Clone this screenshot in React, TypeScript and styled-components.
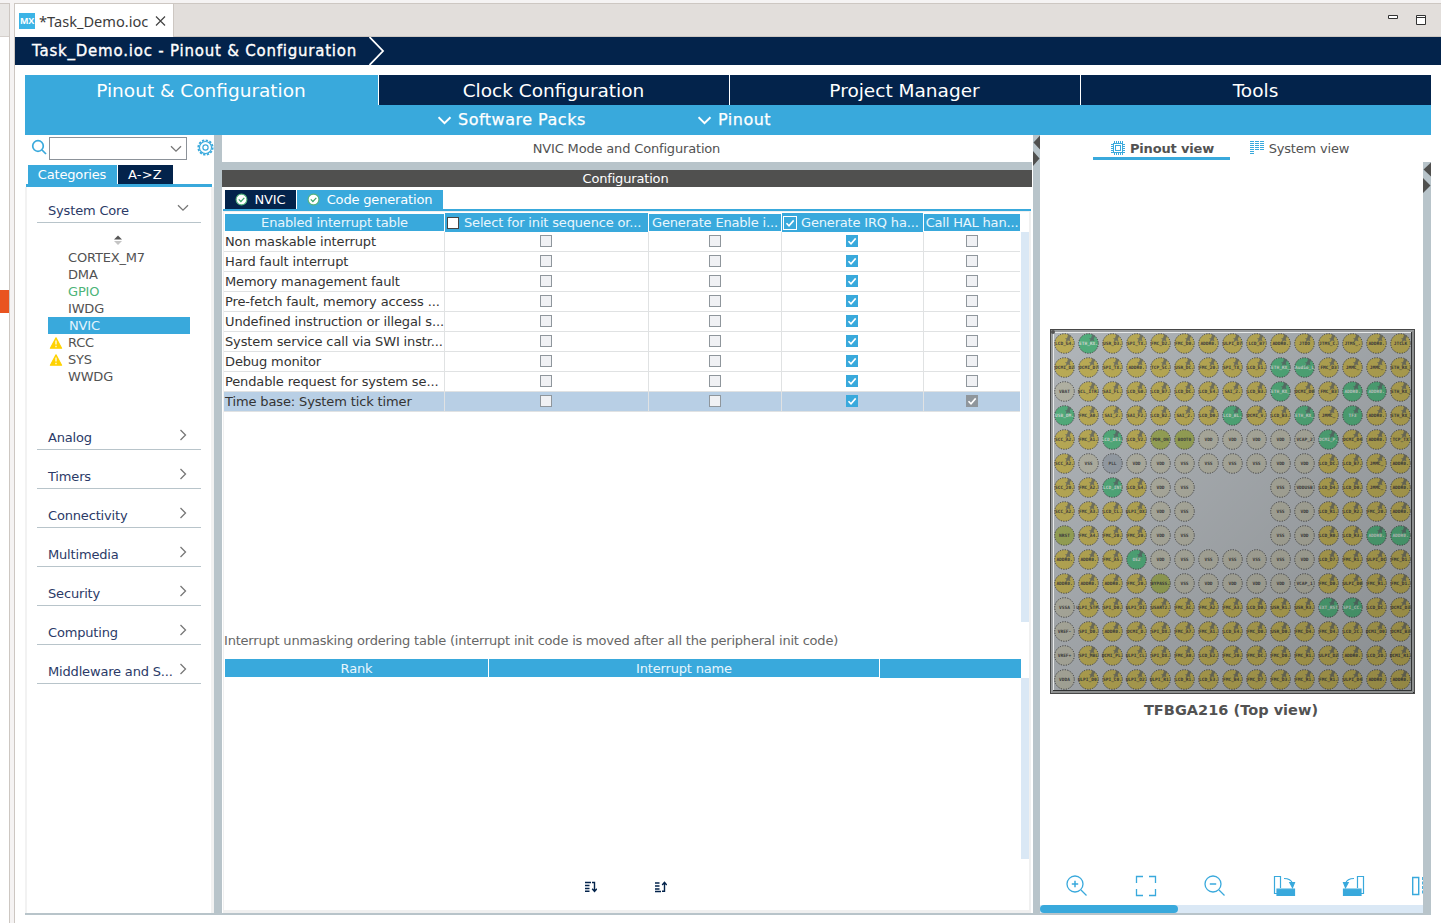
import React from 'react';
import styled, { createGlobalStyle, css } from 'styled-components';

const BLUE = '#39a9dc';
const NAVY = '#03234b';
const STEEL = '#b8c4ca';
const GREY = '#525252';

const Global = createGlobalStyle`
  * { box-sizing: border-box; }
  html, body { margin: 0; background: #fff; overflow: hidden; }
  body { font-family: "DejaVu Sans", sans-serif; font-size: 13px; color: ${GREY}; letter-spacing: -0.17px; }
`;

const Window = styled.div`
  display: flex; width: 1441px; height: 923px; background: #f5f3f3; padding-top: 3px; overflow: hidden;
`;
const LeftStub = styled.div`
  width: 10px; flex: none; border-top: 1px solid #cdc7c2; border-right: 1px solid #cdc7c2; background: #fff;
  display: flex; flex-direction: column;
`;
const StubTab = styled.div`height: 33px; background: #e9e7e5; border-bottom: 1px solid #d5d0cc;`;
const StubMark = styled.div`height: 23px; margin-top: 253px; background: #e95420;`;
const Editor = styled.div`
  margin-left: 4px; flex: 1; border-left: 1px solid #cdc7c2; border-top: 1px solid #cdc7c2; background: #fff;
  display: flex; flex-direction: column; min-width: 0;
`;
const TabStrip = styled.div`height: 33px; display: flex; background: #e2dedb; flex: none;`;
const FileTab = styled.div`
  width: 159px; background: #fff; border-right: 1px solid #cdc7c2; display: flex; align-items: center;
  padding-left: 4px; font-family: "Noto Sans", sans-serif; font-size: 14.6px; color: #3c3c3c; white-space: nowrap;
`;
const MxLogo = styled.span`
  width: 16px; height: 16px; background: #3cb4e6; color: #fff; font: bold 9px/16px "Open Sans", sans-serif;
  text-align: center; margin-right: 4px; flex: none;
`;
const FileName = styled.span`width: 110px; letter-spacing: 0;`;
const StripRest = styled.div`
  flex: 1; border-bottom: 1px solid #cdc7c2; display: flex; justify-content: flex-end; padding: 10px 14px 0 0; gap: 16px;
`;
const Crumb = styled.div`
  height: 28px; background: ${NAVY}; display: flex; align-items: center; color: #fff; flex: none;
  padding-left: 17px; white-space: nowrap;
`;
const CrumbText = styled.span`width: 337px; font-size: 15px; -webkit-text-stroke: 0.35px #fff; letter-spacing: 0.78px;`;

const Body = styled.div`width: 1406px; margin: 10px 0 0 10px; flex: none;`;
const MainTabs = styled.div`height: 30px; display: grid; grid-template-columns: 353px 350px 350px 350px; gap: 1px;`;
const MainTab = styled.div<{ $on?: boolean }>`
  background: ${p => (p.$on ? BLUE : NAVY)}; color: #fff; font-size: 18.5px; line-height: 31px; text-align: center;
  letter-spacing: 0; height: 30px; padding-right: 1px;
`;
const SubBar = styled.div`height: 30px; background: ${BLUE}; display: flex; padding-left: 413px; align-items: center;`;
const SubItem = styled.div<{ $w: number }>`
  width: ${p => p.$w}px; display: flex; align-items: center; gap: 6px; color: #fff; font-size: 16px; white-space: nowrap;
  letter-spacing: 0.5px; -webkit-text-stroke: 0.25px #fff; line-height: 30px; height: 29px;
`;
const Columns = styled.div`display: flex; height: 780px; border-bottom: 2px solid ${STEEL};`;

const NavPane = styled.div`width: 189px; flex: none; display: flex; flex-direction: column;`;
const SearchRow = styled.div`height: 30px; display: flex; padding: 2px 0 0 6px; align-items: flex-start; flex: none;`;
const SearchBox = styled.div`
  width: 138px; height: 23px; border: 1px solid #8c9299; margin-left: 2px; display: flex; justify-content: flex-end;
  padding: 7px 4px 0 0; flex: none;
`;
const SearchIcon = styled.svg`flex: none;`;
const GearSlot = styled.div`margin-left: 10px; padding-top: 2px; line-height: 0; flex: none;`;
const Tabs = styled.div<{ $pad: number }>`height: 19px; display: flex; gap: 1px; padding-left: ${p => p.$pad}px; flex: none;`;
const Tab = styled.div<{ $w: number; $dark?: boolean; $space?: number }>`
  width: ${p => p.$w}px; height: 19px; background: ${p => (p.$dark ? NAVY : BLUE)}; color: #fff; line-height: 19px;
  display: flex; justify-content: center; align-items: center; gap: 7px; letter-spacing: ${p => p.$space ?? -0.17}px;
  white-space: nowrap; padding-right: 1px;
`;
const NavLine = styled.div`height: 3px; margin: 0 2px 0 1px; background: ${BLUE}; flex: none;`;
const NavBody = styled.div`
  flex: 1; padding: 0 12px; box-shadow: inset 2px 0 #f2f2f2, inset -3px 0 #f2f2f2;
`;
const Category = styled.div<{ $first?: boolean }>`
  height: ${p => (p.$first ? 36 : 39)}px; border-bottom: 1px solid ${STEEL}; color: #2b3a67; display: flex;
  justify-content: space-between; align-items: flex-end; padding: 0 14px 3px 11px; width: 164px; line-height: 16px;
  white-space: nowrap;
  svg { margin-bottom: ${p => (p.$first ? 7 : 5)}px; flex: none; ${p => p.$first && css`margin-right: -2px;`} }
`;
const PeriphList = styled.div`height: 188px; padding-top: 11px;`;
const SortMark = styled.div`height: 15px; padding-left: 76px; line-height: 0;`;
const Periph = styled.div<{ $tone?: 'green' | 'on' }>`
  height: 17px; line-height: 17px; width: 142px; margin-left: 11px; display: flex; align-items: center;
  color: ${p => (p.$tone === 'green' ? '#4cb478' : p.$tone === 'on' ? '#e4f4fc' : GREY)};
  ${p => p.$tone === 'on' && css`background: ${BLUE}; padding-left: 1px;`}
`;
const WarnSlot = styled.span`width: 20px; padding-left: 1px; line-height: 0;`;
const Splitter = styled.div<{ $w: number }>`width: ${p => p.$w}px; background: ${STEEL}; flex: none; line-height: 0;`;

const Mid = styled.div`width: 811px; padding-right: 1px; flex: none; display: flex; flex-direction: column;`;
const MidTitle = styled.div`height: 27px; line-height: 27px; text-align: center; padding-right: 1px; flex: none;`;
const ConfigBar = styled.div`
  height: 25px; border-top: 8px solid ${STEEL}; background: #50504f; color: #fff; text-align: center; line-height: 17px;
  flex: none; padding-right: 3px;
`;
const TabWrap = styled.div`padding-top: 3px; flex: none;`;
const MidBody = styled.div`
  flex: 1; margin: 0 1px 0 1px; border-top: 2px solid ${BLUE}; box-shadow: inset 1px 1px #f0f0f0, inset -2px -3px #f0f0f0;
  padding: 2px 2px 0 1px; display: flex; flex-direction: column; min-height: 0;
`;
const TableArea = styled.div`display: flex; height: 409px; flex: none;`;
const Grid = styled.div`width: 797px; display: flex; flex-direction: column;`;
const HeadRow = styled.div`
  display: grid; grid-template-columns: 220px 204px 133px 142px 97px; height: 19px; color: #e8f6fd;
  white-space: nowrap; flex: none;
`;
const Head = styled.div<{ $big?: boolean }>`
  background: ${BLUE}; border-left: 1px solid #fff; display: flex; align-items: center; overflow: hidden; line-height: 17px;
  ${p => (p.$big
    ? css`justify-content: flex-start; padding-left: 1px;`
    : css`justify-content: center; border-top: 1px solid #fff; border-bottom: 1px solid #fff;`)}
`;
const HeadCheck = styled.span<{ $on?: boolean }>`
  width: ${p => (p.$on ? 14 : 12)}px; height: ${p => (p.$on ? 14 : 12)}px; margin: 0 ${p => (p.$on ? 4 : 5)}px 0 ${p => (p.$on ? 0 : 1)}px;
  background: ${p => (p.$on ? BLUE : '#fff')}; border: 1px solid ${p => (p.$on ? '#fff' : '#444')}; line-height: 0; flex: none;
`;
const Row = styled.div<{ $sel?: boolean }>`
  display: grid; grid-template-columns: 221px 204px 133px 142px 96px; height: 20px; flex: none; width: 796px;
  background: ${p => (p.$sel ? '#b8cfe5' : '#fff')};
`;
const Cell = styled.div`
  border-right: 1px solid #e0e2e3; border-bottom: 1px solid #e0e2e3; display: flex; align-items: center; justify-content: center;
  padding-right: 1px;
  &:last-child { border-right: 0; }
`;
const NameCell = styled(Cell)`justify-content: flex-start; color: #333; padding: 0 0 0 1px; white-space: nowrap; line-height: 18px; letter-spacing: -0.13px;`;
const Box = styled.span<{ $s: number }>`
  width: 12px; height: 12px; margin-top: -1px; line-height: 0;
  border: ${p => (p.$s === 0 ? '1px solid #8f969c' : '0')}; background: ${p => (p.$s === 0 ? '#f0f1f4' : p.$s === 1 ? BLUE : '#8f969c')};
`;
const VTrack = styled.div<{ $h: number }>`width: 8px; height: ${p => p.$h}px; margin-top: 19px; background: #dae8f5;`;
const OrderNote = styled.div`height: 37px; line-height: 37px; color: #666; letter-spacing: -0.2px; flex: none; white-space: nowrap;`;
const OrderArea = styled.div`display: flex; height: 200px; flex: none;`;
const OrderHead = styled.div`
  width: 797px; height: 19px; display: grid; grid-template-columns: 264px 391px 142px; color: #e8f6fd; text-align: center; line-height: 19px;
`;
const OrderCell = styled.div`
  background: ${BLUE}; height: 19px; border-left: 1px solid #fff; border-bottom: 1px solid #fff;
  &:last-child { border-bottom: 0; }
`;
const OrderButtons = styled.div`display: flex; gap: 58px; padding: 22px 0 0 361px;`;

const Side = styled.div`flex: 1; display: flex; flex-direction: column; min-width: 0;`;
const ViewTabs = styled.div`height: 27px; display: flex; padding-left: 53px; flex: none;`;
const ViewTab = styled.div<{ $on?: boolean }>`
  width: 137px; height: 25px; display: flex; align-items: center; justify-content: center; gap: 5px; white-space: nowrap;
  padding: 5px 0 0 ${p => (p.$on ? 2 : 0)}px;
  border-bottom: 3px solid ${p => (p.$on ? BLUE : 'transparent')}; font-weight: ${p => (p.$on ? 700 : 400)};
  margin-right: 1px; svg { margin-top: -2px; }
`;
const SideMain = styled.div`flex: 1; display: flex; min-height: 0;`;
const Canvas = styled.div`width: 383px; display: flex; flex-direction: column;`;
const ChipHolder = styled.div`padding: 167px 0 0 10px; height: 532px; line-height: 0; flex: none;`;
const ChipName = styled.div`
  height: 32px; line-height: 32px; font-size: 14.5px; font-weight: 700; text-align: center; padding-right: 1px; letter-spacing: 0.03px;
`;
const Tools = styled.div`margin-top: 139px; height: 40px; display: flex; gap: 45px; padding: 9px 0 0 25px; overflow: hidden; svg { flex: none; }`;
const HTrack = styled.div`height: 8px; background: #dae8f5;`;
const HThumb = styled.div`width: 138px; height: 8px; border-radius: 4px; background: ${BLUE};`;

const Chev = ({ down, color = '#777', w = 1.3 }: { down?: boolean; color?: string; w?: number }) =>
  down ? (
    <svg width="12" height="8" viewBox="0 0 12 8" fill="none" stroke={color} strokeWidth={w}><path d="M1 1.2l5 5 5-5" /></svg>
  ) : (
    <svg width="8" height="12" viewBox="0 0 8 12" fill="none" stroke={color} strokeWidth={w}><path d="M1.5 1l5 5-5 5" /></svg>
  );
const SubChev = () => (
  <svg width="14" height="9" viewBox="0 0 14 9" fill="none" stroke="#fff" strokeWidth="2"><path d="M.500 1.200l6 6 6-6" /></svg>
);
const Warn = () => (
  <svg width="14" height="12" viewBox="0 0 14 12">
    <path d="M7 .8L12.6 11.2H1.4z" fill="#ffd200" stroke="#ffd200" strokeWidth="1.2" strokeLinejoin="round" />
    <path d="M7 3.5v4M7 8.8v1.4" stroke="#fff" strokeWidth="1.2" />
  </svg>
);
const Tick = ({ s = 12 }: { s?: number }) => (
  <svg width={s} height={s} viewBox="0 0 12 12" fill="none" stroke="#fff" strokeWidth="1.6"><path d="M2.5 6.2l2.5 2.6 4.7-5.4" /></svg>
);
const Ok = () => (
  <svg width="13" height="13" viewBox="0 0 13 13" fill="none">
    <circle cx="6.5" cy="6.5" r="5.4" fill="#fff" stroke="#55b37e" strokeWidth="1.1" />
    <path d="M3.8 6.3l2.1 2.2 3.4-3.7" stroke="#3fa76d" strokeWidth="1.2" />
  </svg>
);
const Gear = () => (
  <svg width="17" height="17" viewBox="0 0 17 17" fill="none" stroke={BLUE}>
    <circle cx="8.5" cy="8.5" r="7.2" strokeWidth="1.8" strokeDasharray="2.3 1.47" />
    <circle cx="8.5" cy="8.5" r="6" strokeWidth="1.1" />
    <circle cx="8.5" cy="8.5" r="2.6" strokeWidth="1.2" />
  </svg>
);
const Handles = ({ w }: { w: number }) => (
  <svg width={w} height="32" viewBox={`0 0 ${w} 32`} fill="#50504f">
    <path d={`M${w} .5v14L0.5 7.5zM0 16v15l${w - 0.5}-7.500z`} />
  </svg>
);
const ChipIcon = () => (
  <svg width="14" height="14" viewBox="0 0 14 14" fill="none" stroke={BLUE} shapeRendering="crispEdges">
    <rect x="2.5" y="2.5" width="9" height="9" /><rect x="4.5" y="4.5" width="5" height="5" strokeWidth="1" />
    <path d="M3.5 0v2M5.5 0v2M7.5 0v2M9.5 0v2M11.5 0v2M3.5 12v2M5.5 12v2M7.5 12v2M9.5 12v2M11.5 12v2M0 3.5h2M0 5.5h2M0 7.5h2M0 9.5h2M0 11.5h2M12 3.5h2M12 5.5h2M12 7.5h2M12 9.5h2M12 11.5h2" />
  </svg>
);
const ListIcon = () => (
  <svg width="14" height="14" viewBox="0 0 14 14" stroke={BLUE} shapeRendering="crispEdges">
    <path d="M0 .5h4M0 2.5h4M0 4.5h4M0 6.5h4M0 8.5h4M0 10.5h4M0 12.5h4M5 .5h4M5 2.5h4M5 4.5h4M5 6.5h4M5 8.5h4M10 .5h4M10 2.5h4M10 4.5h4M10 6.5h4M10 8.5h4" />
  </svg>
);

const OrderIcon = ({ up }: { up?: boolean }) => (
  <svg width="12" height="12" viewBox="0 0 12 12" fill="none" stroke={NAVY} strokeWidth="1.4">
    <path d={up ? 'M0 2h4.5M0 5h4.5M0 8h4.5M0 10.5h6' : 'M0 1.5h6M0 4.5h4.5M0 7.5h4.5M0 10.2h4.5'} />
    <path d={up ? 'M7 10.3h2.5V2M7.2 4l2.3-2.6L11.8 4' : 'M7 1.5h2.5V10M7.2 7.8l2.3 2.6 2.3-2.6'} />
  </svg>
);

const Y = 'Y';
const PIN_KINDS = [
  'YGYYYYYYYYYYYYY', 'YYYYYYYYYGGYYYY', 'PYYYYYYYYGYYGGY', 'GYYYYYYGYYGYGYY', 'YYGYOOPPPPPGYYY',
  'YPBPPPPPPPPYYYY', 'YYGYPP   PPYYYY', 'YYYYPP   PPYYYY', 'OYYYPP   PPYYGG', 'YYYGPPPPPPPYYYY',
  'YYYYOPPPPPPYYYY', 'PYYYYYYYYYYGGYY', 'PYYYYYYYYYYYYYY', 'PYYYYYYYYYYYYYY', 'PYYYYYYYYYYYYYY',
];
const PIN_NAMES = [
  'LCD_G4. ETH_RX. USR_D3. SPI_TX. FMC_D2. FMC_D0. ADDR0. ULPI_D7 LCD_B7 ADDR0. JTDO JTMS_C. JTMS_. ADDR0. JTCLK'.split(' '),
  'DCMI_D2 DCMI_D7 SPI_TX. ADDR0. TCP_SC. USR_DC. FMC_20. SPI_TX_ LCD_E1. ETH_RX_ Audio_L FMC_D3 JMMC_ JMMC_ ETH_RX_'.split(' '),
  'VBAT SCL_ITR. SAI_FL. LCD_G0. LCD_B7. LCD_DC. LCD_E4. SAI_2. LCD_B3. ETH_RX_ DCMI_D0 FMC_B3 ADDR0. ADDR0. ETH_RX_'.split(' '),
  'USB_DM. FMC_A0. SAI_2. SAI_F2. LCD_B2. SAI_2. LCD_D0. LCD_BL. DCMI_V. LCD_B3. ETH_RX_ JMMC_ TF3 ADDR0. ETH_RX_'.split(' '),
  'SCC_A2. FMC_A1. LCD_DE1. LCD_V2. PDR_ON BOOT0 VDD VDD VDD VDD VCAP_2 DCMI_P. DCMI_D4 ADDR0. TCP_TX'.split(' '),
  'SCC_A2. VSS PLL VDD VDD VSS VSS VSS VSS VDD VDD LCD_DC. LCD_B7. JMMC_ ADDR0.'.split(' '),
  'SCC_20. FMC_A2. LCD_INT LCD_G4. VDD VSS - - - VSS VDDUSB LCD_D4. LCD_D0. JMMC_ ADDR0.'.split(' '),
  'SCC_A2. FMC_A3. LCD_CL. ULPI_DX. VDD VSS - - - VSS VDD LCD_R1. LCD_R2. FMC_20. ADDR0.'.split(' '),
  'NRST FMC_A4. FMC_20. FMC_20. VDD VSS - - - VSS VDD LCD_R0. LCD_R3. ADDR0. ADDR0.'.split(' '),
  'ADDR0. ADDR0. FMC_A5. OE2 VDD VSS VSS VSS VSS VSS VDD LCD_D7. FMC_R1. ULPI_DC FMC_D1.'.split(' '),
  'ADDR0. ADDR0. ADDR0. FMC_20. BYPASS. VSS VDD VDD VDD VDD VCAP_1 FMC_D0. ULPI_D0 FMC_R1. FMC_D1.'.split(' '),
  'VSSA ULPI_STP. SPI_D0. ULPI_DI. USART2. FMC_AC. FMC_A2. FMC_A3. LCD_D0. USR_R1. USR_R3. EXT_RST SPI_CC. LCD_DC. DCMI_D3'.split(' '),
  'VREF- SPI_D0. ADDR0. DCMI_D. SPI_DX. FMC_A7. FMC_A1. LCD_E4. FMC_D0. USR_D0. FMC_D4. FMC_D4. LCD_2C. DCMI_D0. DCMI_B3'.split(' '),
  'VREF+ SPI_MBL DCMI_PL. ULPI_CL. SPI_DX. FMC_A0. LCD_E2. FMC_20. FMC_DC. FMC_D0. FMC_R1. ULPI_D2 ADDR0. LCD_2D. DCMI_R1.'.split(' '),
  'VDDA ULPI_D0. SPI_C0. ULPI_D2. ULPI_R1. LCD_R1. LCD_E3. FMC_B4. FMC_D7. FMC_D3. FMC_R1. FMC_R1. ULPI_D4 ADDR0. ADDR0.'.split(' '),
];
const PIN_FILL: Record<string, string> = { [Y]: '#bbac56', G: '#52ad7c', P: '#b2b2a4', O: '#9aa658', B: '#98a0a8' };

const Chip = () => (
  <svg width="365" height="365" viewBox="0 0 365 365">
    <defs>
      <linearGradient id="shade" x1="0" y1="0" x2="1" y2="1">
        <stop offset="0" stopColor="#000" stopOpacity="0" /><stop offset="1" stopColor="#000" stopOpacity="0.22" />
      </linearGradient>
    </defs>
    <rect width="365" height="365" fill="#484848" />
    <rect x="1" y="1" width="363" height="363" fill="#999c9e" />
    <rect x="3" y="3" width="361" height="361" fill="#e8eaeb" />
    <rect x="4" y="4" width="360" height="360" fill="#303233" />
    <rect x="4" y="4" width="359" height="359" fill="#b0b5b9" />
    {PIN_KINDS.flatMap((row, r) =>
      row.split('').map((k, c) => {
        if (k === ' ') return null;
        const cx = 14.5 + c * 24;
        const cy = 14.5 + r * 24;
        return (
          <g key={`${r}-${c}`} transform={`translate(${cx} ${cy})`}>
            <circle r="9.8" fill={PIN_FILL[k]} stroke="#3a3a3a" strokeWidth="1" strokeDasharray="1.1 1.466" />
            {(k === 'Y' || k === 'G') && (
              <path d="M.5-5.500l2 .3 1.200-3.800 3 1.600-1.500 2.800.8 2.400-2.500-.8-2.800 2.200 1.300-2.900z" fill="#5c6266" fillOpacity="0.75" />
            )}
            <text y="1.500" textAnchor="middle" fontFamily="DejaVu Sans Mono" fontWeight="700" fontSize="4.500" letterSpacing="0"
              fill={k === 'G' ? '#cfd6d2' : '#3f4040'}>{PIN_NAMES[r][c]}</text>
          </g>
        );
      })
    )}
    <rect x="4" y="4" width="359" height="359" fill="url(#shade)" />
    <path d="M361.500 3v359M3 361.500h359" stroke="#303233" /><path d="M363 2v361M2 363h361" stroke="#8d8f8f" strokeWidth="2" />
    <circle cx="3" cy="3" r="2" fill="#555" />
  </svg>
);

const Zoom = ({ plus }: { plus?: boolean }) => (
  <svg width="24" height="24" viewBox="0 0 24 24" fill="none" stroke={BLUE} strokeWidth="1.3">
    <circle cx="10" cy="10" r="8" /><path d="M16 16l5.5 5.5" /><path d="M6.800 10h6.400" strokeWidth="1.500" />{plus && <path d="M10 6.8v6.4" strokeWidth="1.500" />}
  </svg>
);
const Fit = () => (
  <svg width="24" height="24" viewBox="0 0 24 24" fill="none" stroke={BLUE} strokeWidth="1.3">
    <path d="M2.5 9V2.5H9M15 2.5h6.5V9M21.5 15v6.5H15M9 21.5H2.5V15" />
  </svg>
);
const Rotate = ({ flip }: { flip?: boolean }) => (
  <svg width="24" height="24" viewBox="0 0 24 24" fill="none" stroke={BLUE} strokeWidth="1.2">
    <g transform={flip ? 'translate(25 0) scale(-1 1)' : undefined}>
      <path d="M8.5 14V2.500H2.500v17H5" /><path d="M5 15.200h17.500v6.200H5z" fill={BLUE} />
      <path d="M12 4.500c4 0 7.500 2 8.500 5" /><path d="M17.800 8.500h4.700l-2 5z" fill={BLUE} />
    </g>
  </svg>
);
const Mirror = () => (
  <svg width="24" height="24" viewBox="0 0 24 24" fill="none" stroke={BLUE} strokeWidth="1.400">
    <path d="M2.700 3.500h6v17h-6z" /><path d="M12.800 3v18" strokeDasharray="3 1.500" /><path d="M16 3.500h6v17h-6z" />
  </svg>
);

const NAV_REST = ['Analog', 'Timers', 'Connectivity', 'Multimedia', 'Security', 'Computing', 'Middleware and S...'];
const PERIPHS: { n: string; warn?: boolean; tone?: 'green' | 'on' }[] = [
  { n: 'CORTEX_M7' }, { n: 'DMA' }, { n: 'GPIO', tone: 'green' }, { n: 'IWDG' }, { n: 'NVIC', tone: 'on' },
  { n: 'RCC', warn: true }, { n: 'SYS', warn: true }, { n: 'WWDG' },
];
const ROWS = [
  'Non maskable interrupt', 'Hard fault interrupt', 'Memory management fault', 'Pre-fetch fault, memory access ...',
  'Undefined instruction or illegal s...', 'System service call via SWI instr...', 'Debug monitor',
  'Pendable request for system se...', 'Time base: System tick timer',
];

export default function App() {
  return (
    <>
      <Global />
      <Window>
        <LeftStub><StubTab /><StubMark /></LeftStub>
        <Editor>
          <TabStrip>
            <FileTab>
              <MxLogo>MX</MxLogo>
              <FileName>*Task_Demo.ioc</FileName>
              <svg width="22" height="12" viewBox="0 0 22 12" stroke="#444" strokeWidth="1.2"><path d="M7 1.500l9 9M16 1.500l-9 9" /></svg>
            </FileTab>
            <StripRest>
              <svg width="12" height="12" viewBox="0 0 12 12" fill="none" stroke="#333"><path d="M1.500 1.500h9v3h-9z" fill="#fff" /></svg>
              <svg width="12" height="12" viewBox="0 0 12 12" fill="none" stroke="#333"><path d="M1.500 1.500h9v9h-9zM1.500 3.500h9" fill="#fff" /></svg>
            </StripRest>
          </TabStrip>
          <Crumb>
            <CrumbText>Task_Demo.ioc - Pinout &amp; Configuration</CrumbText>
            <svg width="18" height="28" viewBox="0 0 18 28" fill="none" stroke="#fff" strokeWidth="1.800"><path d="M.500 0L14 14L.500 28" /></svg>
          </Crumb>
          <Body>
            <MainTabs>
              <MainTab $on>Pinout &amp; Configuration</MainTab>
              <MainTab>Clock Configuration</MainTab>
              <MainTab>Project Manager</MainTab>
              <MainTab>Tools</MainTab>
            </MainTabs>
            <SubBar>
              <SubItem $w={260}><SubChev />Software Packs</SubItem>
              <SubItem $w={100}><SubChev />Pinout</SubItem>
            </SubBar>
            <Columns>
              <NavPane>
                <SearchRow>
                  <SearchIcon width="16" height="20" viewBox="0 0 16 20" fill="none" stroke={BLUE} strokeWidth="1.700"><circle cx="7" cy="9" r="5.300" /><path d="M11 13l4 4" /></SearchIcon>
                  <SearchBox><Chev down /></SearchBox>
                  <GearSlot><Gear /></GearSlot>
                </SearchRow>
                <Tabs $pad={3}>
                  <Tab $w={89}>Categories</Tab>
                  <Tab $w={55} $dark $space={0.2}>A-&gt;Z</Tab>
                </Tabs>
                <NavLine />
                <NavBody>
                  <Category $first>System Core<Chev down /></Category>
                  <PeriphList>
                    <SortMark>
                      <svg width="10" height="12" viewBox="0 0 10 12"><path d="M1 5.500L5 1.500l4 4z" fill="#555" /><path d="M1 7l4 4 4-4z" fill="#c4c4c4" /></svg>
                    </SortMark>
                    {PERIPHS.map(p => (
                      <Periph key={p.n} $tone={p.tone}><WarnSlot>{p.warn && <Warn />}</WarnSlot>{p.n}</Periph>
                    ))}
                  </PeriphList>
                  {NAV_REST.map(n => <Category key={n}>{n}<Chev /></Category>)}
                </NavBody>
              </NavPane>
              <Splitter $w={8} />
              <Mid>
                <MidTitle>NVIC Mode and Configuration</MidTitle>
                <ConfigBar>Configuration</ConfigBar>
                <TabWrap>
                  <Tabs $pad={3}>
                    <Tab $w={71} $dark><Ok />NVIC</Tab>
                    <Tab $w={146}><Ok />Code generation</Tab>
                  </Tabs>
                </TabWrap>
                <MidBody>
                  <TableArea>
                    <Grid>
                      <HeadRow>
                        <Head>Enabled interrupt table</Head>
                        <Head $big><HeadCheck />Select for init sequence or...</Head>
                        <Head>Generate Enable i...</Head>
                        <Head $big><HeadCheck $on><Tick /></HeadCheck>Generate IRQ ha...</Head>
                        <Head>Call HAL han...</Head>
                      </HeadRow>
                      {ROWS.map((n, i) => (
                        <Row key={n} $sel={i === 8}>
                          <NameCell>{n}</NameCell>
                          <Cell><Box $s={0} /></Cell>
                          <Cell><Box $s={0} /></Cell>
                          <Cell><Box $s={1}><Tick /></Box></Cell>
                          <Cell><Box $s={i === 8 ? 2 : 0}>{i === 8 && <Tick />}</Box></Cell>
                        </Row>
                      ))}
                    </Grid>
                    <VTrack $h={390} />
                  </TableArea>
                  <OrderNote>Interrupt unmasking ordering table (interrupt init code is moved after all the peripheral init code)</OrderNote>
                  <OrderArea>
                    <OrderHead><OrderCell>Rank</OrderCell><OrderCell>Interrupt name</OrderCell><OrderCell /></OrderHead>
                    <VTrack $h={181} />
                  </OrderArea>
                  <OrderButtons><OrderIcon /><OrderIcon up /></OrderButtons>
                </MidBody>
              </Mid>
              <Splitter $w={7}><Handles w={7} /></Splitter>
              <Side>
                <ViewTabs>
                  <ViewTab $on><ChipIcon />Pinout view</ViewTab>
                  <ViewTab><ListIcon />System view</ViewTab>
                </ViewTabs>
                <SideMain>
                  <Canvas>
                    <ChipHolder><Chip /></ChipHolder>
                    <ChipName>TFBGA216 (Top view)</ChipName>
                    <Tools><Zoom plus /><Fit /><Zoom /><Rotate /><Rotate flip /><Mirror /></Tools>
                    <HTrack><HThumb /></HTrack>
                  </Canvas>
                  <Splitter $w={8}><Handles w={8} /></Splitter>
                </SideMain>
              </Side>
            </Columns>
          </Body>
        </Editor>
      </Window>
    </>
  );
}
